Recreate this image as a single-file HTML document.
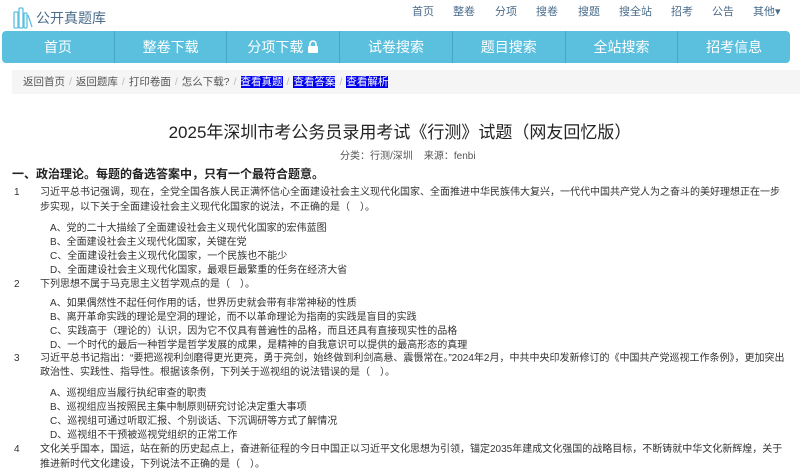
<!DOCTYPE html><html><head><meta charset="utf-8"><style>
body{margin:0;width:800px;height:472px;overflow:hidden;background:#fff;font-family:"Liberation Sans","Noto Sans CJK SC",sans-serif;position:relative;color:#333}
.a{position:absolute;white-space:nowrap}
.top{font-size:11px;color:#4a6d8c;top:3px}
.nav{position:absolute;left:2px;top:31px;width:788px;height:32px;background:#5bc0de;border-radius:4px;display:flex}
.nav div{flex:1;color:#fff;font-size:14px;text-align:center;line-height:32px;border-left:1px solid #46a8c8}
.nav div:first-child{border-left:none}
.bc{position:absolute;left:12px;top:70px;width:788px;height:24px;background:#f5f5f5;font-size:10.5px;line-height:24px;color:#555}
.bc span.s{color:#bbb;margin:0 4px}
.bc b{font-weight:normal;background:#0000ee;color:#fff}
.q{font-size:10px;line-height:14px;height:14px;color:#333;margin-top:3px}
</style></head><body>
<svg class="a" style="left:13px;top:7px" width="21" height="22" viewBox="0 0 21 22"><g fill="none" stroke="#5bc0de" stroke-width="1.3"><rect x="1" y="5" width="4" height="16" rx="1"/><rect x="6" y="1" width="4" height="20" rx="1"/><rect x="11" y="6" width="3" height="15" rx="1"/><path d="M15 8l4 12"/></g></svg>
<div class="a" style="left:36px;top:8px;font-size:14px;color:#4a6d8c">公开真题库</div>
<div class="a top" style="left:412px">首页</div>
<div class="a top" style="left:453px">整卷</div>
<div class="a top" style="left:495px">分项</div>
<div class="a top" style="left:536px">搜卷</div>
<div class="a top" style="left:578px">搜题</div>
<div class="a top" style="left:619px">搜全站</div>
<div class="a top" style="left:671px">招考</div>
<div class="a top" style="left:712px">公告</div>
<div class="a top" style="left:753px">其他▾</div>
<div class="nav"><div>首页</div><div>整卷下载</div><div>分项下载 <svg width="12" height="13" viewBox="0 0 12 13" style="vertical-align:-1px"><path d="M3 6V4a3 3 0 0 1 6 0v2" fill="none" stroke="#fff" stroke-width="1.6"/><rect x="1" y="6" width="10" height="7" rx="1" fill="#fff"/></svg></div><div>试卷搜索</div><div>题目搜索</div><div>全站搜索</div><div>招考信息</div></div>
<div class="bc"><span style="margin-left:11px">返回首页</span><span class="s">/</span>返回题库<span class="s">/</span>打印卷面<span class="s">/</span>怎么下载?<span class="s">/</span><b>查看真题</b><span class="s">/</span><b>查看答案</b><span class="s">/</span><b>查看解析</b></div>
<div class="a" style="left:0;width:800px;text-align:center;top:118px;font-size:17px;color:#222">2025年深圳市考公务员录用考试《行测》试题（网友回忆版）</div>
<div class="a" style="left:340px;top:147px;font-size:10px;color:#555">分类：行测/深圳&nbsp;&nbsp;&nbsp;&nbsp;来源：fenbi</div>
<div class="a" style="left:12px;top:165px;font-size:12px;font-weight:bold;color:#222">一、政治理论。每题的备选答案中，只有一个最符合题意。</div>
<div class="a q" style="left:14px;top:183px">1</div>
<div class="a q" style="left:40px;top:183px">习近平总书记强调，现在，全党全国各族人民正满怀信心全面建设社会主义现代化国家、全面推进中华民族伟大复兴，一代代中国共产党人为之奋斗的美好理想正在一步</div>
<div class="a q" style="left:40px;top:198px">步实现，以下关于全面建设社会主义现代化国家的说法，不正确的是（　）。</div>
<div class="a q" style="left:50px;top:219px">A、党的二十大描绘了全面建设社会主义现代化国家的宏伟蓝图</div>
<div class="a q" style="left:50px;top:233px">B、全面建设社会主义现代化国家，关键在党</div>
<div class="a q" style="left:50px;top:247px">C、全面建设社会主义现代化国家，一个民族也不能少</div>
<div class="a q" style="left:50px;top:261px">D、全面建设社会主义现代化国家，最艰巨最繁重的任务在经济大省</div>
<div class="a q" style="left:14px;top:275px">2</div>
<div class="a q" style="left:40px;top:275px">下列思想不属于马克思主义哲学观点的是（　）。</div>
<div class="a q" style="left:50px;top:294px">A、如果偶然性不起任何作用的话，世界历史就会带有非常神秘的性质</div>
<div class="a q" style="left:50px;top:308px">B、离开革命实践的理论是空洞的理论，而不以革命理论为指南的实践是盲目的实践</div>
<div class="a q" style="left:50px;top:322px">C、实践高于（理论的）认识，因为它不仅具有普遍性的品格，而且还具有直接现实性的品格</div>
<div class="a q" style="left:50px;top:336px">D、一个时代的最后一种哲学是哲学发展的成果，是精神的自我意识可以提供的最高形态的真理</div>
<div class="a q" style="left:14px;top:349px">3</div>
<div class="a q" style="left:40px;top:349px">习近平总书记指出：“要把巡视利剑磨得更光更亮，勇于亮剑，始终做到利剑高悬、震慑常在。”2024年2月，中共中央印发新修订的《中国共产党巡视工作条例》，更加突出</div>
<div class="a q" style="left:40px;top:363px">政治性、实践性、指导性。根据该条例，下列关于巡视组的说法错误的是（　）。</div>
<div class="a q" style="left:50px;top:384px">A、巡视组应当履行执纪审查的职责</div>
<div class="a q" style="left:50px;top:398px">B、巡视组应当按照民主集中制原则研究讨论决定重大事项</div>
<div class="a q" style="left:50px;top:412px">C、巡视组可通过听取汇报、个别谈话、下沉调研等方式了解情况</div>
<div class="a q" style="left:50px;top:426px">D、巡视组不干预被巡视党组织的正常工作</div>
<div class="a q" style="left:14px;top:440px">4</div>
<div class="a q" style="left:40px;top:440px">文化关乎国本，国运，站在新的历史起点上，奋进新征程的今日中国正以习近平文化思想为引领，锚定2035年建成文化强国的战略目标，不断铸就中华文化新辉煌，关于</div>
<div class="a q" style="left:40px;top:455px">推进新时代文化建设，下列说法不正确的是（　）。</div>
</body></html>
